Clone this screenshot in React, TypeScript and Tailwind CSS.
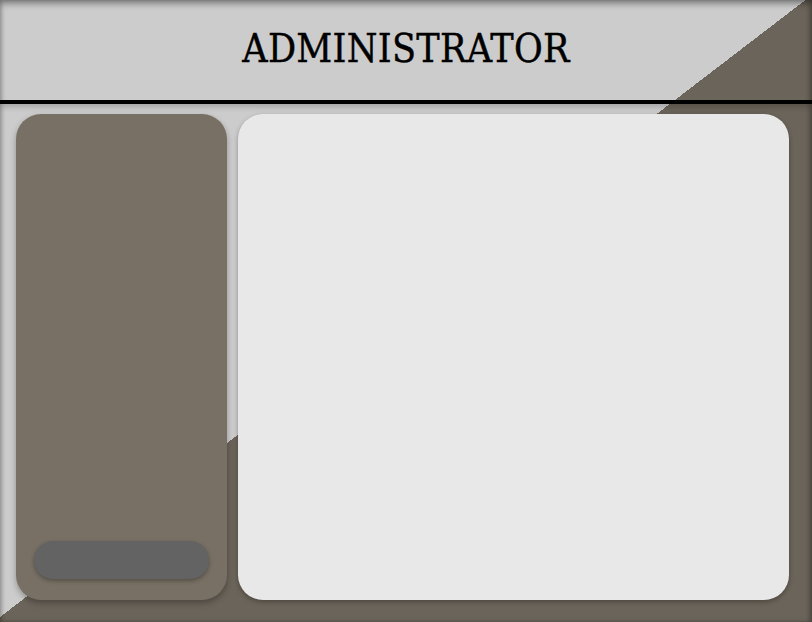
export default function App() {
  return (
    <div className="relative w-[812px] h-[622px] overflow-hidden bg-[linear-gradient(to_bottom_right,#cccccc_49.6%,#6b645a_49.6%)] flex flex-col">
      <div className="pointer-events-none absolute inset-0 shadow-[inset_0_4px_6px_rgba(0,0,0,0.35),inset_2px_0_3px_rgba(0,0,0,0.1),inset_-3px_0_4px_rgba(0,0,0,0.15)]" />
      <header className="h-[104px] shrink-0 border-b-4 border-black flex items-center justify-center shadow-[0_3px_6px_rgba(0,0,0,0.2)]">
        <h1 className="text-[39px] leading-none tracking-[0.3px] text-black font-['DejaVu_Serif_Condensed','DejaVu_Serif',serif] pb-[3px] [-webkit-text-stroke:0.4px_black]">
          ADMINISTRATOR
        </h1>
      </header>
      <main className="flex gap-[11px] pl-[16px] pt-[10px]">
        <aside className="w-[211px] h-[486px] rounded-[25px] bg-[#787064] shadow-[0_3px_6px_rgba(0,0,0,0.3)] flex flex-col justify-end px-[18px] pb-[21px]">
          <div className="h-[38px] rounded-full bg-[#636363] shadow-[0_2px_4px_rgba(0,0,0,0.3)]" />
        </aside>
        <section className="w-[551px] h-[486px] rounded-[25px] bg-[#e8e8e8] shadow-[0_2px_5px_rgba(0,0,0,0.3)]" />
      </main>
    </div>
  );
}
